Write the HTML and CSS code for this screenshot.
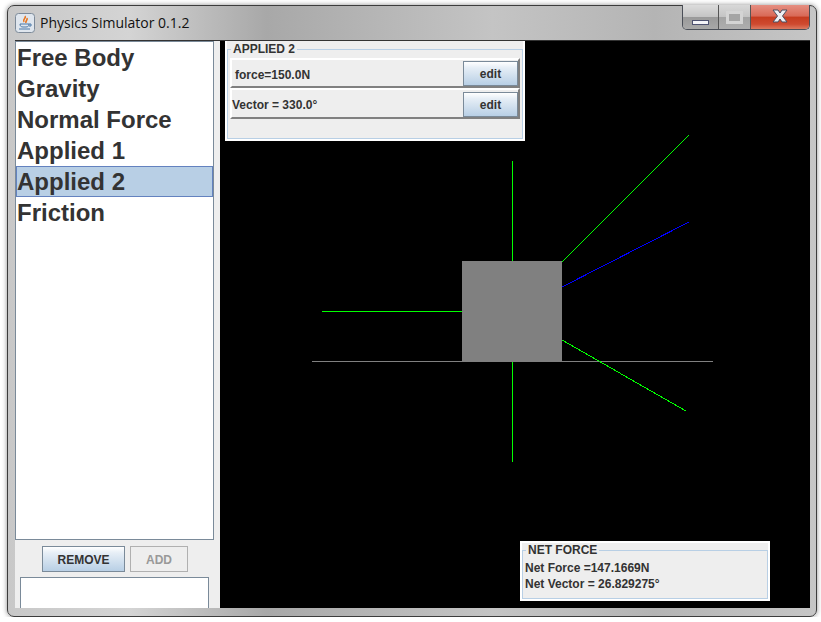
FILE: index.html
```html
<!DOCTYPE html>
<html lang="en">

<head>
    <meta charset="UTF-8">
    <title>Physics Simulator 0.1.2</title>
    <link rel="stylesheet" href="styles.css">
</head>

<body>
    <div class="window">
        <div class="titlebar">
            <svg class="app_icon" width="20" height="20" viewBox="0 0 20 20">
                <rect x="0.5" y="0.5" width="19" height="19" rx="3" fill="#dfe6ee" stroke="#7d8a99" />
                <path d="M10 3 C12 5 7 6 9 9 M12 5 C13 7 10 8 11 10" fill="none" stroke="#e8741c" stroke-width="1.6" />
                <path d="M5 11 H14 C14 13 13 14 11 14 H8 C6 14 5 13 5 11 Z M14 11 H16 V13 H14" fill="none" stroke="#4a78a8" />
                <path d="M4 16 H15" stroke="#4a78a8" />
            </svg>
            <span class="title">Physics Simulator 0.1.2</span>
            <div class="win_buttons">
                <div class="win_btn min_btn"><span class="min_glyph"></span></div>
                <div class="win_btn max_btn"><span class="max_glyph"></span></div>
                <div class="win_btn close_btn">
                    <svg width="20" height="14" viewBox="0 0 20 14">
                        <path d="M3 1 H8 L10 4 L12 1 H17 L12.5 7 L17 13 H12 L10 10 L8 13 H3 L7.5 7 Z" fill="#eef0f4" stroke="#4a4f60" />
                    </svg>
                </div>
            </div>
        </div>

        <div class="content">
            <div class="side">
                <ul class="force_list">
                    <li>Free Body</li>
                    <li>Gravity</li>
                    <li>Normal Force</li>
                    <li>Applied 1</li>
                    <li class="selected">Applied 2</li>
                    <li>Friction</li>
                </ul>
                <div class="side_buttons">
                    <button class="btn remove_btn">REMOVE</button>
                    <button class="btn add_btn">ADD</button>
                </div>
                <div class="name_box"></div>
            </div>

            <div class="canvas">
                <!-- viewBox uses window coordinates so the numbers read off directly -->
                <svg class="scene" viewBox="220 41 590 567">
                    <line x1="512.5" y1="161" x2="512.5" y2="462" stroke="#00ff00" />
                    <line x1="312" y1="361.5" x2="713" y2="361.5" stroke="#808080" />
                    <line x1="322" y1="311.5" x2="462" y2="311.5" stroke="#00ff00" />
                    <line x1="562" y1="262" x2="689" y2="135" stroke="#00ff00" />
                    <line x1="562" y1="287" x2="689" y2="222" stroke="#0000ff" />
                    <line x1="562" y1="340" x2="686" y2="411" stroke="#00ff00" />
                    <rect x="462" y="261" width="100" height="101" fill="#808080" />
                </svg>

                <div class="panel applied_panel">
                    <fieldset class="group">
                        <legend>APPLIED 2</legend>
                        <div class="row short">
                            <span class="row_label first">force=150.0N</span>
                            <button class="btn edit_btn">edit</button>
                        </div>
                        <div class="row">
                            <span class="row_label">Vector = 330.0°</span>
                            <button class="btn edit_btn">edit</button>
                        </div>
                    </fieldset>
                </div>

                <div class="panel net_panel">
                    <fieldset class="group">
                        <legend>NET FORCE</legend>
                        <div class="net_line">Net Force =147.1669N</div>
                        <div class="net_line">Net Vector = 26.829275°</div>
                    </fieldset>
                </div>
            </div>
        </div>
    </div>
</body>

</html>
```

FILE: styles.css
```css
html, body {
    margin: 0;
    padding: 0;
    background: #fff;
    overflow: hidden;
}

.window {
    box-sizing: border-box;
    width: 810px;
    height: 612px;
    margin: 5px 0 0 7px;
    border: 1px solid #3c3c3c;
    border-radius: 7px;
    box-shadow: 0 0 5px rgba(0, 0, 0, 0.45);
    background:
        linear-gradient(90deg, #c8c8c8 0%, #d4d4d4 15%, #a8a8a8 32%, #c4c4c4 60%, #b4b4b4 80%, #c6c6c6 100%);
    display: flex;
    flex-direction: column;
    padding: 0 6px 8px 7px;
}

.titlebar {
    height: 34px;
    display: flex;
    align-items: flex-start;
    position: relative;
    flex: none;
}

.app_icon {
    margin-top: 7px;
    flex: none;
}

.title {
    margin: 7px 0 0 5px;
    font: 14px "Open Sans", sans-serif;
    color: #111;
    line-height: 20px;
}

.win_buttons {
    display: flex;
    height: 25px;
    border: 1px solid #4b4f58;
    border-top: none;
    border-radius: 0 0 5px 5px;
    box-sizing: border-box;
    width: 128px;
    overflow: hidden;
    position: absolute;
    right: 0;
    top: -1px;
}

.win_btn {
    display: flex;
    justify-content: center;
    align-items: center;
    height: 100%;
    box-sizing: border-box;
}

.min_btn {
    width: 36px;
    border-right: 1px solid #555;
    background: linear-gradient(#dcdcdc 0%, #c4c4c4 50%, #9a9a9a 52%, #a8a8a8 100%);
    align-items: flex-end;
    padding-bottom: 4px;
}

.min_glyph {
    display: block;
    width: 15px;
    height: 3px;
    background: #f4f4f8;
    border: 1px solid #4e5270;
}

.max_btn {
    width: 32px;
    border-right: 1px solid #555;
    background: linear-gradient(#d8d8d8 0%, #c4c4c4 50%, #a4a4a4 52%, #aeaeae 100%);
}

.max_glyph {
    display: block;
    box-sizing: border-box;
    width: 17px;
    height: 13px;
    border: 3px solid #d4d4d4;
    background: #a4a4a4;
}

.close_btn {
    flex: 1;
    background: linear-gradient(#e58f82 0%, #d96a58 45%, #c63c20 52%, #cf4a30 80%, #dc7a60 100%);
    padding-bottom: 3px;
}

.content {
    flex: 1;
    display: flex;
    min-height: 0;
    border-top: 1px solid #333;
    background: #eee;
}

.side {
    width: 205px;
    flex: none;
    display: flex;
    flex-direction: column;
    background: #eee;
    overflow: hidden;
}

.force_list {
    list-style: none;
    margin: 0;
    padding: 0;
    box-sizing: border-box;
    width: 199px;
    height: 499px;
    flex: none;
    background: #fff;
    border: 1px solid #7a8a99;
    font: bold 24px "Liberation Sans", sans-serif;
    color: #333;
}

.force_list li {
    box-sizing: border-box;
    height: 31px;
    line-height: 29px;
    border: 1px solid transparent;
}

.force_list .selected {
    background: #b8cfe5;
    border-color: #6382bf;
}

.side_buttons {
    display: flex;
    gap: 5px;
    margin: 6px 0 5px 27px;
    flex: none;
}

.btn {
    box-sizing: border-box;
    font: bold 12px "Liberation Sans", sans-serif;
    color: #333;
    padding: 1px 0 0;
    background: linear-gradient(#fff, #e6eef6 25%, #b8cfe5);
    border: 1px solid #7a8a99;
}

.remove_btn {
    width: 83px;
    height: 26px;
}

.add_btn {
    width: 58px;
    height: 26px;
    background: #eee;
    border-color: #b0b0b0;
    color: #999;
}

.name_box {
    box-sizing: border-box;
    margin-left: 5px;
    width: 189px;
    flex: 1;
    background: #fff;
    border: 1px solid #7a8a99;
    border-bottom: none;
}

.canvas {
    flex: 1;
    position: relative;
    background: #000;
    overflow: hidden;
}

.scene {
    position: absolute;
    left: 0;
    top: 0;
    width: 590px;
    height: 567px;
    shape-rendering: crispEdges;
}

.panel {
    position: absolute;
    box-sizing: border-box;
    background: #eee;
    border: 2px solid #fff;
    border-top: none;
    font: bold 12px "Liberation Sans", sans-serif;
    color: #333;
}

.applied_panel {
    left: 5px;
    top: 0;
    width: 300px;
    height: 100px;
    padding: 1px 0 0;
}

.net_panel {
    left: 300px;
    top: 500px;
    width: 250px;
    height: 60px;
    border-top: 2px solid #fff;
}

.group {
    box-sizing: border-box;
    height: 100%;
    margin: 0;
    padding: 0 2px;
    border: 1px solid #b8cfe5;
    min-width: 0;
}

.group legend {
    padding: 0 2px;
    margin-left: 1px;
    font-size: 12px;
    line-height: 14px;
}

.applied_panel .group {
    padding-top: 2px;
}

.row {
    display: flex;
    align-items: center;
    justify-content: space-between;
    box-sizing: border-box;
    height: 31px;
    padding: 1px 0 0 1px;
    border-top: 2px solid #fff;
    border-left: 2px solid #fff;
    border-bottom: 2px solid #808080;
    border-right: 2px solid #808080;
    width: 290px;
}

.row.short {
    height: 30px;
}

.row_label {
    margin: 2px 0 0 -1px;
}

.row_label.first {
    margin-left: 2px;
}

.edit_btn {
    width: 55px;
    height: 25px;
    flex: none;
}

.net_line {
    height: 16px;
    line-height: 16px;
}

.net_panel .group {
    padding-top: 3px;
}
```
